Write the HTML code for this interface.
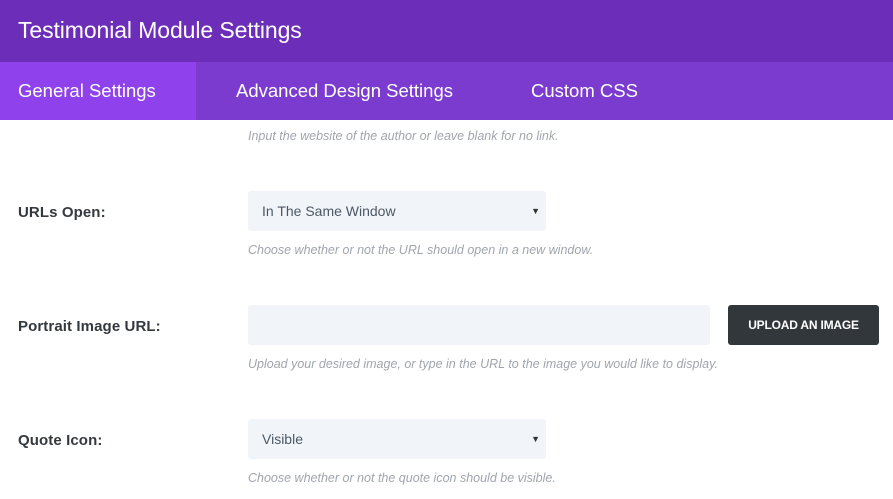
<!DOCTYPE html>
<html><head><style>
*{margin:0;padding:0;box-sizing:border-box}
body{width:893px;height:499px;background:#fff;font-family:"Liberation Sans",sans-serif;position:relative;overflow:hidden}
.hd{position:absolute;left:0;top:0;width:893px;height:62px;background:#6c2eb9;color:#fff;font-size:23px;padding:17px 0 0 18px;letter-spacing:-0.1px}
.tabs{position:absolute;left:0;top:62px;width:893px;height:58px;background:#7b3bcf}
.tab{position:absolute;top:0;height:58px;color:#fff;font-size:18.5px;line-height:58px;letter-spacing:0}
.act{left:0;width:196px;background:#8f42ec;padding-left:18px}
.d{position:absolute;left:248px;font-size:12.5px;font-style:italic;color:#a0a5ad}
.l{position:absolute;left:18px;font-size:15px;font-weight:bold;color:#33393f;letter-spacing:0.1px}
.f{position:absolute;left:248px;height:40px;background:#f1f4f8;border-radius:3px;font-size:14px;color:#4c5866;line-height:40px;padding-left:14px}
.f span{position:absolute;right:6px;font-size:9px;color:#333}
.b{position:absolute;left:728px;top:305px;width:151px;height:40px;background:#32373c;border-radius:3px;color:#fff;font-size:12px;font-weight:bold;text-align:center;line-height:40px;letter-spacing:-0.2px}
</style></head><body>
<div class="hd">Testimonial Module Settings</div>
<div class="tabs">
<div class="tab act">General Settings</div>
<div class="tab" style="left:236px">Advanced Design Settings</div>
<div class="tab" style="left:531px">Custom CSS</div>
</div>
<div class="d" style="top:129px">Input the website of the author or leave blank for no link.</div>
<div class="l" style="top:204px">URLs Open:</div>
<div class="f" style="top:191px;width:298px">In The Same Window<span>▼</span></div>
<div class="d" style="top:243px">Choose whether or not the URL should open in a new window.</div>
<div class="l" style="top:318px">Portrait Image URL:</div>
<div class="f" style="top:305px;width:462px"></div>
<div class="b">UPLOAD AN IMAGE</div>
<div class="d" style="top:357px">Upload your desired image, or type in the URL to the image you would like to display.</div>
<div class="l" style="top:432px">Quote Icon:</div>
<div class="f" style="top:419px;width:298px">Visible<span>▼</span></div>
<div class="d" style="top:471px">Choose whether or not the quote icon should be visible.</div>
</body></html>
